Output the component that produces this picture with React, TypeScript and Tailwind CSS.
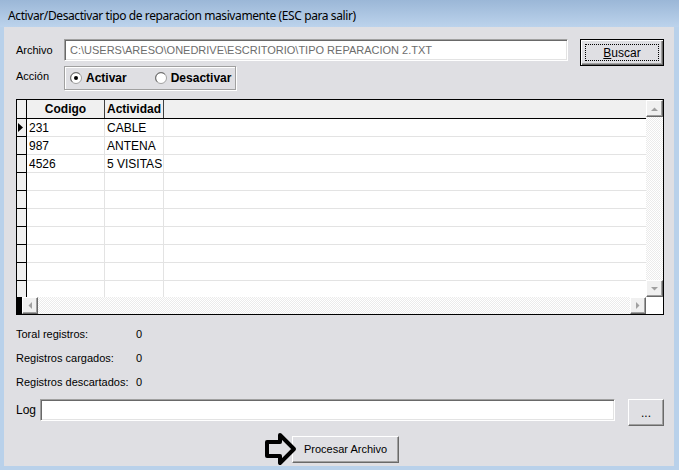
import React from "react";

const ui = "font-['Liberation_Sans',Arial,sans-serif]";

function Radio({ checked }: { checked: boolean }) {
  return (
    <svg width="12" height="12" viewBox="0 0 12 12" className="shrink-0">
      <circle cx="6" cy="6" r="5.5" fill="#fff" stroke="#a0a0a0" strokeWidth="1" />
      <path d="M2.2 9.8 A5.3 5.3 0 0 1 9.8 2.2" fill="none" stroke="#696969" strokeWidth="1" />
      {checked && <circle cx="6" cy="6" r="2" fill="#000" />}
    </svg>
  );
}

function ScrollBtn({ dir, className = "" }: { dir: "up" | "down" | "left" | "right"; className?: string }) {
  const tri: Record<string, string> = {
    up: "1,5 4.5,1.5 8,5",
    down: "1,1 4.5,4.5 8,1",
    left: "5,1 1.5,4.5 5,8",
    right: "1,1 4.5,4.5 1,8",
  };
  const vert = dir === "up" || dir === "down";
  return (
    <div
      className={`flex items-center justify-center bg-[#f0f0f0] border-t border-l border-t-white border-l-white border-b border-r border-b-[#696969] border-r-[#696969] shadow-[inset_-1px_-1px_0_#a0a0a0] ${className}`}
    >
      <svg width={vert ? 9 : 6} height={vert ? 6 : 9} viewBox={vert ? "0 0 9 6" : "0 0 6 9"}>
        <polygon points={tri[dir]} fill="#a0a0a0" />
      </svg>
    </div>
  );
}

const track =
  "bg-[repeating-conic-gradient(#ffffff_0_25%,#ebebeb_0_50%)] bg-[length:2px_2px]";

const rows = [
  ["231", "CABLE"],
  ["987", "ANTENA"],
  ["4526", "5 VISITAS"],
  ["", ""],
  ["", ""],
  ["", ""],
  ["", ""],
  ["", ""],
  ["", ""],
  ["", ""],
];

function Grid() {
  return (
    <div className="mt-[9px] w-[648px] h-[216px] border border-black flex flex-col bg-white">
      <div className="flex h-[197px]">
        <div className="flex-1 overflow-hidden">
          <div className="flex h-[19px] border-b border-black bg-[#f0f0f0] text-[12px] font-bold text-black">
            <div className="w-[10px] border-r border-black" />
            <div className="w-[78px] border-r border-[#404040] flex items-center justify-center">Codigo</div>
            <div className="w-[59px] border-r border-[#404040] flex items-center justify-center">Actividad</div>
            <div className="flex-1" />
          </div>
          {rows.map((r, i) => (
            <div key={i} className="flex h-[18px] text-[12px] text-black">
              <div className="w-[10px] border-r border-b border-black bg-[#f0f0f0] flex items-center">
                {i === 0 && (
                  <svg width="5" height="9" viewBox="0 0 5 9" className="ml-[1px]">
                    <polygon points="0,0 5,4.5 0,9" fill="#000" />
                  </svg>
                )}
              </div>
              <div className="w-[78px] border-r border-b border-[#e3e3e3] pl-[2px] flex items-center">{r[0]}</div>
              <div className="w-[59px] border-r border-b border-[#e3e3e3] pl-[2px] flex items-center whitespace-nowrap">{r[1]}</div>
              <div className="flex-1 border-b border-[#e3e3e3]" />
            </div>
          ))}
        </div>
        <div className={`w-[17px] flex flex-col ${track}`}>
          <ScrollBtn dir="up" className="h-[17px]" />
          <div className="flex-1" />
          <ScrollBtn dir="down" className="h-[17px]" />
        </div>
      </div>
      <div className="flex h-[17px]">
        <div className="w-[5px] bg-black" />
        <ScrollBtn dir="left" className="w-[16px]" />
        <div className={`flex-1 ${track}`} />
        <ScrollBtn dir="right" className="w-[16px]" />
        <div className="w-[17px] bg-white" />
      </div>
    </div>
  );
}

const raised =
  "bg-[#dfdfe3] border-t border-l border-t-white border-l-white border-b border-r border-b-[#696969] border-r-[#696969] shadow-[inset_-1px_-1px_0_#a0a0a0]";
const sunken =
  "bg-white border-t border-l border-t-[#a0a0a0] border-l-[#a0a0a0] border-b border-r border-b-white border-r-white shadow-[inset_1px_1px_0_#696969,inset_-1px_-1px_0_#e3e3e3]";

export default function App() {
  return (
    <div className={`w-[679px] h-[470px] bg-[#b9d1ea] flex flex-col ${ui} overflow-hidden`}>
      <div className="h-[27px] shrink-0 bg-gradient-to-b from-[#9bb7d7] to-[#bcd3ec] flex items-center pl-[8px] pt-[4px]">
        <span className="font-['Noto_Sans',sans-serif] text-[12px] tracking-[-0.4px] text-black whitespace-nowrap">
          Activar/Desactivar tipo de reparacion masivamente (ESC para salir)
        </span>
      </div>
      <div className="ml-[4px] w-[670px] h-[439px] bg-[#dfdfe3] pl-[12px] pr-[10px] pt-[12px] text-[11px] text-black">
        <div className="flex items-start h-[27px]">
          <div className="w-[48px] h-[22px] flex items-center">Archivo</div>
          <div className={`w-[504px] h-[22px] ${sunken} flex items-center pl-[5px] text-[#6d6d6d] whitespace-nowrap overflow-hidden`}>
            C:\USERS\ARESO\ONEDRIVE\ESCRITORIO\TIPO REPARACION 2.TXT
          </div>
          <div className="ml-[12px] w-[84px] h-[27px] relative border border-black bg-[#dfdfe3] shadow-[inset_1px_1px_0_#fff,inset_-1px_-1px_0_#696969,inset_-2px_-2px_0_#a0a0a0] flex items-center justify-center">
            <span className="absolute inset-[4px] border border-dotted border-black" />
            <span className="text-[12px]">
              <span className="underline">B</span>uscar
            </span>
          </div>
        </div>
        <div className="flex items-start h-[24px]">
          <div className="w-[48px] h-[20px] flex items-center">Acción</div>
          <div className="w-[172px] h-[24px] border border-[#a0a0a0] shadow-[inset_1px_1px_0_#fff,1px_1px_0_#fff] flex items-center pl-[5px] text-[12px] font-bold">
            <Radio checked />
            <span className="ml-[4px]">Activar</span>
            <span className="ml-[28px]">
              <Radio checked={false} />
            </span>
            <span className="ml-[4px]">Desactivar</span>
          </div>
        </div>
        <Grid />
        <div className="mt-[7px] flex flex-col">
          {[
            ["Toral registros:", "0"],
            ["Registros cargados:", "0"],
            ["Registros descartados:", "0"],
          ].map(([l, v]) => (
            <div key={l} className="h-[24px] flex items-center">
              <span className="w-[120px]">{l}</span>
              <span>{v}</span>
            </div>
          ))}
        </div>
        <div className="mt-[5px] flex items-start h-[27px]">
          <div className="w-[24px] h-[22px] flex items-center text-[12px]">Log</div>
          <div className={`w-[575px] h-[22px] ${sunken}`} />
          <div className={`ml-[13px] w-[36px] h-[27px] ${raised} flex items-center justify-center text-[12px]`}>
            ...
          </div>
        </div>
        <div className="mt-[6px] flex items-center h-[34px] pl-[248px]">
          <svg width="33" height="34" viewBox="0 0 33 34" className="relative z-10 -mr-[5px] shrink-0">
            <polygon
              points="3,10 16,10 16,3 30,17 16,31 16,24 3,24"
              fill="#dfdfe3"
              stroke="#000"
              strokeWidth="4"
              strokeLinejoin="round"
            />
          </svg>
          <div className={`w-[107px] h-[27px] ${raised} flex items-center justify-center text-[11px]`}>
            Procesar Archivo
          </div>
        </div>
      </div>
    </div>
  );
}
